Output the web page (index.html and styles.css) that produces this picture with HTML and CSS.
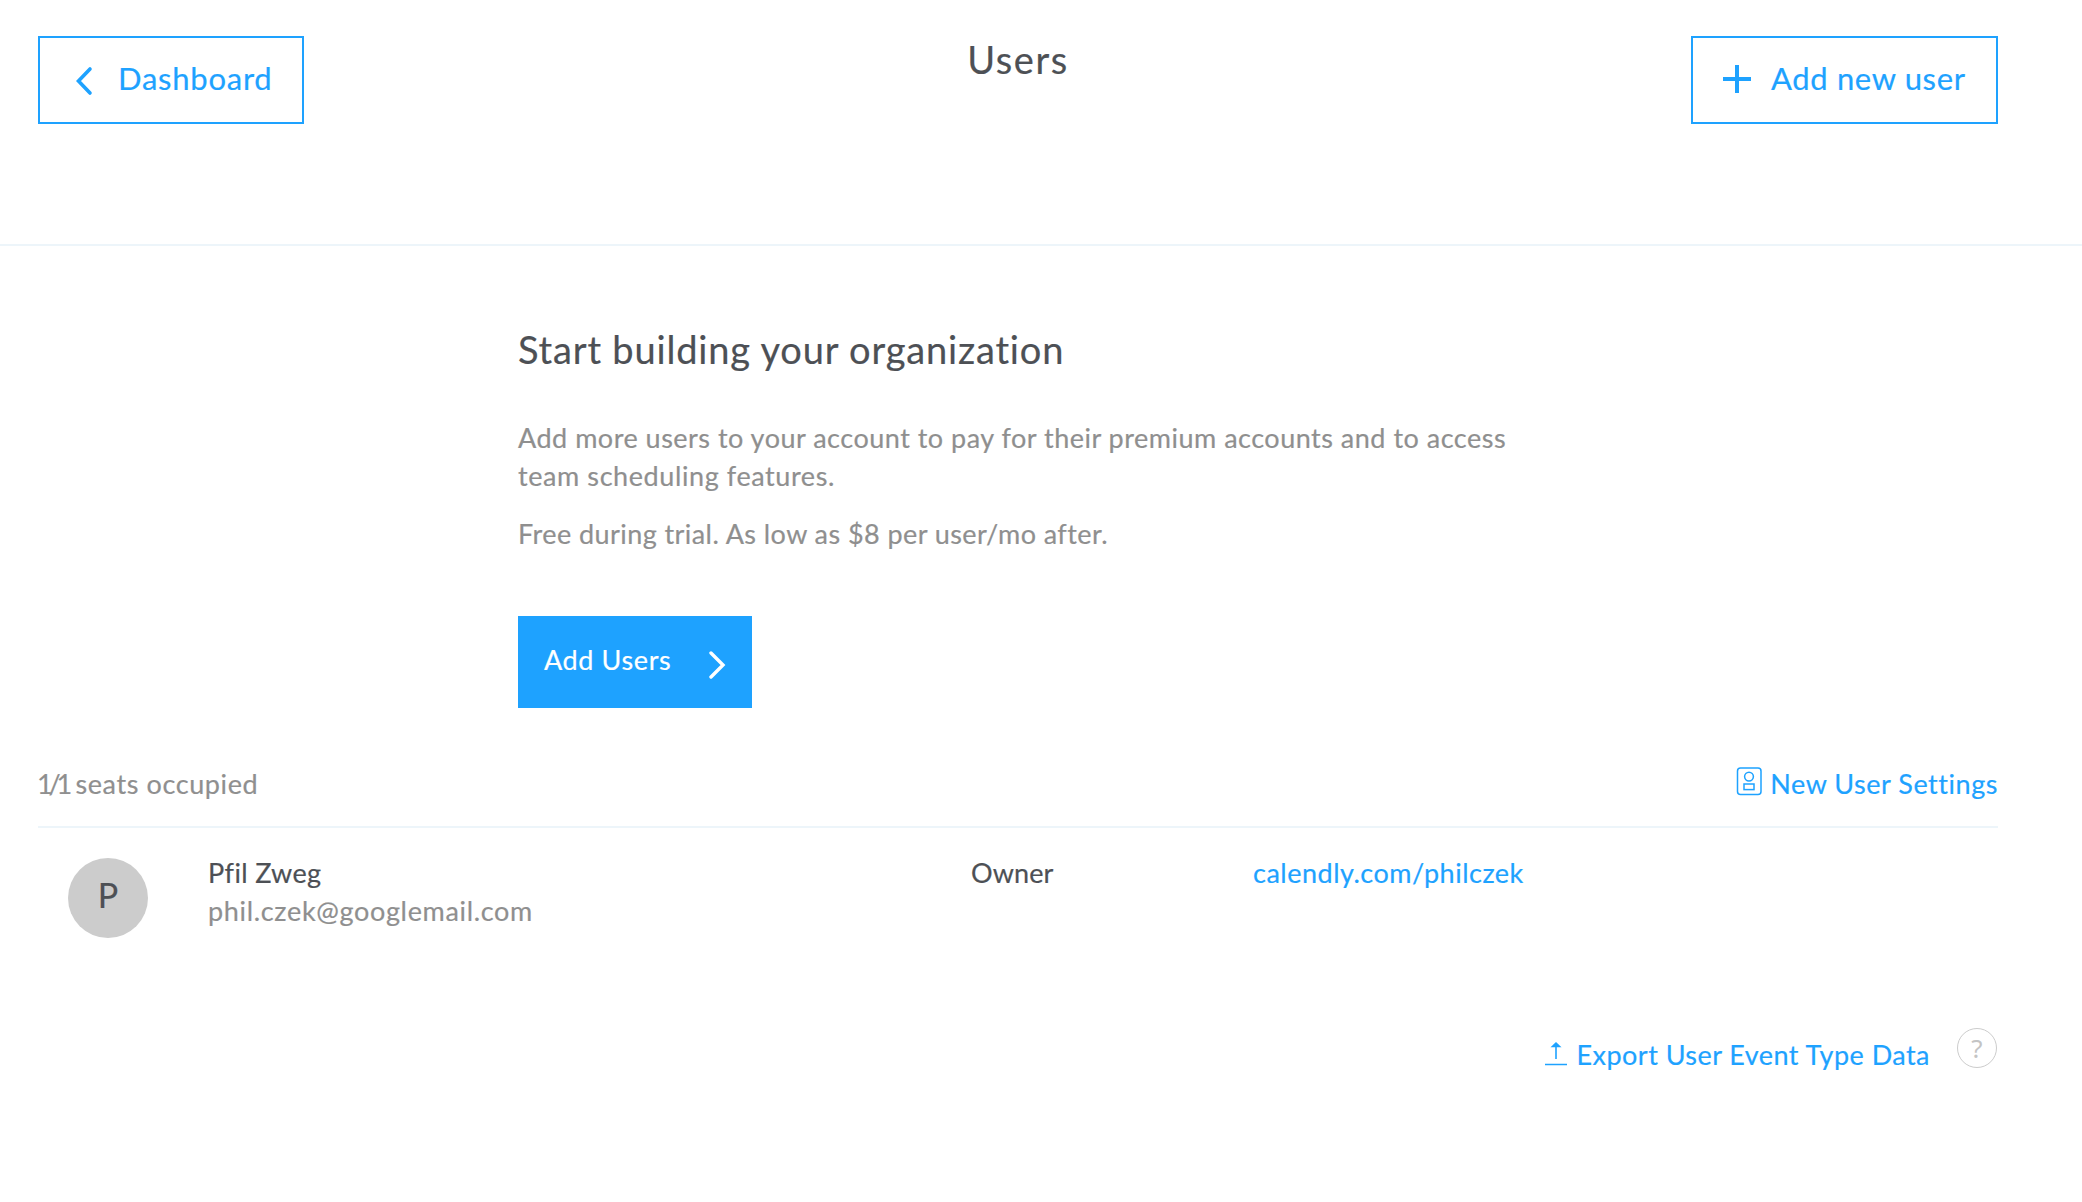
FILE: index.html
```html
<!DOCTYPE html>
<html lang="en">
<head>
<meta charset="utf-8">
<title>Users</title>
<link rel="stylesheet" href="styles.css">
</head>
<body>
<header class="header">
  <a class="btn-outline btn-back">
    <svg class="icon-back" width="18" height="30" viewBox="0 0 18 30"><path d="M15 3 3.5 15 15 27" fill="none" stroke="currentColor" stroke-width="3.6" stroke-linecap="round"/></svg>
    <span class="btn-label label-back">Dashboard</span>
  </a>
  <h1 class="title">Users</h1>
  <a class="btn-outline btn-add">
    <svg class="icon-plus" width="28" height="28" viewBox="0 0 28 28"><path d="M14 0V28M0 14H28" fill="none" stroke="currentColor" stroke-width="4"/></svg>
    <span class="btn-label label-add">Add new user</span>
  </a>
</header>
<main class="main">
  <section class="intro">
    <h2 class="intro-title">Start building your organization</h2>
    <p class="intro-text">Add more users to your account to pay for their premium accounts and to access<br><span class="intro-second">team scheduling features.</span></p>
    <p class="intro-text intro-price">Free during trial. As low as $8 per user/mo after.</p>
    <a class="btn-solid">
      <span class="solid-label">Add Users</span>
      <svg class="icon-next" width="18" height="28" viewBox="0 0 18 28"><path d="M3 2 15 14 3 26" fill="none" stroke="currentColor" stroke-width="3.4" stroke-linecap="round"/></svg>
    </a>
  </section>
  <div class="seats">
    <span class="seats-count"><span class="ratio">1/1</span> seats occupied</span>
    <a class="settings">
      <svg class="icon-badge" width="26" height="30" viewBox="0 0 26 30" fill="none" stroke="currentColor" stroke-width="1.5"><rect x="1.5" y="1" width="23.5" height="26.5" rx="3"/><circle cx="13" cy="9.6" r="4.4"/><rect x="8" y="17" width="10" height="5.6"/></svg>
      <span class="settings-label">New User Settings</span>
    </a>
  </div>
  <div class="member">
    <div class="avatar">P</div>
    <div class="who">
      <div class="name">Pfil Zweg</div>
      <div class="email">phil.czek@googlemail.com</div>
    </div>
    <div class="role">Owner</div>
    <a class="link">calendly.com/philczek</a>
  </div>
  <div class="footer">
    <a class="export">
      <svg class="icon-export" width="22" height="24" viewBox="0 0 22 24"><path d="M11 5V17M0 22.5H22" fill="none" stroke="currentColor" stroke-width="1.6"/><path d="M11 0 16.5 5.2H5.5Z" fill="currentColor"/></svg>
      <span class="export-label">Export User Event Type Data</span>
    </a>
    <span class="help">?</span>
  </div>
</main>
</body>
</html>
```
FILE: styles.css
```css
* { box-sizing: border-box; }
body {
  margin: 0;
  background: #fff;
  color: #4d5055;
  font: 400 27px/38px Lato, sans-serif;
  -webkit-text-stroke: .2px currentColor;
}
h1, h2, p { margin: 0; font-weight: 400; }
a { color: #1ea2ff; text-decoration: none; }
svg { display: block; flex: none; }

.header {
  display: grid;
  grid-template-columns: 1fr auto 1fr;
  align-items: start;
  height: 246px;
  padding: 36px 84px 0 38px;
  border-bottom: 2px solid #edf5fa;
}
.title { font-size: 38px; line-height: 46px; letter-spacing: 1.6px; }
.btn-outline {
  display: flex;
  align-items: center;
  height: 88px;
  border: 2px solid #1ea2ff;
  font-size: 31px;
  white-space: nowrap;
}
.btn-back { width: 266px; padding-left: 35px; }
.btn-add { width: 307px; padding-left: 30px; justify-self: end; }
.btn-label { padding-bottom: 4px; }
.label-back { margin-left: 25px; letter-spacing: .75px; }
.label-add { margin-left: 20px; letter-spacing: .65px; }
.icon-back { margin-top: 2px; }
.icon-plus { margin-bottom: 2px; }

.main { padding: 78px 84px 0 38px; }
.intro { margin-left: 480px; white-space: nowrap; }
.intro-title { font-size: 38px; line-height: 50px; letter-spacing: .82px; }
.intro-text { margin-top: 45px; color: #8f8f8f; letter-spacing: .5px; }
.intro-second { letter-spacing: .59px; }
.intro-price { margin-top: 20px; letter-spacing: .43px; }
.btn-solid {
  display: flex;
  align-items: center;
  justify-content: space-between;
  width: 234px;
  height: 92px;
  margin-top: 63px;
  padding: 0 26px;
  background: #1ea2ff;
  color: #fff;
}
.solid-label { padding-bottom: 5px; letter-spacing: .62px; }
.icon-next { margin-top: 5px; }

.seats {
  display: flex;
  justify-content: space-between;
  height: 120px;
  padding-top: 57px;
  border-bottom: 2px solid #edf5fa;
}
.seats-count { color: #8f8f8f; letter-spacing: .6px; margin-left: -1px; }
.ratio { letter-spacing: -4.2px; }
.settings { display: flex; gap: 8px; }
.icon-badge { margin-top: 2px; }
.settings-label { letter-spacing: .54px; }

.member {
  display: grid;
  grid-template-columns: 170px 763px 282px 1fr;
  height: 208px;
  padding-top: 26px;
}
.avatar {
  width: 80px;
  height: 80px;
  margin: 4px 0 0 30px;
  border-radius: 50%;
  background: #ccc;
  font-size: 34px;
  line-height: 74px;
  text-align: center;
}
.name { letter-spacing: .35px; }
.email { color: #8f8f8f; letter-spacing: .67px; }
.role { letter-spacing: .09px; }
.link { letter-spacing: .5px; }

.footer { display: flex; justify-content: flex-end; align-items: flex-start; }
.export { display: flex; }
.icon-export { margin: 6px 10px 0 0; }
.export-label { letter-spacing: .46px; }
.help {
  width: 40px;
  height: 40px;
  margin: -8px 1px 0 27px;
  border: 1.5px solid #ccc;
  border-radius: 50%;
  color: #c4c4c4;
  font: 26px/38px "Noto Sans", sans-serif;
  -webkit-text-stroke: 0;
  text-align: center;
}
```
